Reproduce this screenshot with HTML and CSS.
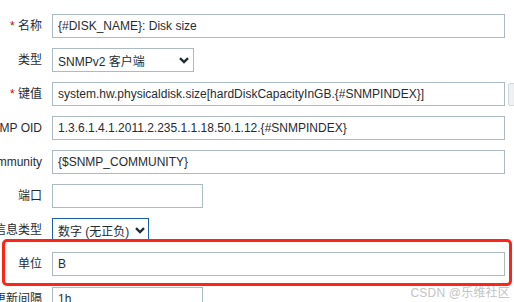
FILE: index.html
```html
<!DOCTYPE html>
<html lang="zh">
<head>
<meta charset="utf-8">
<link rel="stylesheet" href="styles.css">
</head>
<body>
<div class="form">
  <div class="row">
    <div class="label"><span><span class="req">*</span> 名称</span></div>
    <div class="input wide">{#DISK_NAME}: Disk size</div>
  </div>
  <div class="row">
    <div class="label"><span>类型</span></div>
    <div class="select type-select"><span>SNMPv2 客户端</span>
      <svg class="chev" width="10" height="7" viewBox="0 0 10 7"><path d="M1 1.2 L5 5 L9 1.2" fill="none" stroke="#1f2c33" stroke-width="2.4"/></svg>
    </div>
  </div>
  <div class="row">
    <div class="label"><span><span class="req">*</span> 键值</span></div>
    <div class="input wide">system.hw.physicaldisk.size[hardDiskCapacityInGB.{#SNMPINDEX}]</div>
    <div class="btn"></div>
  </div>
  <div class="row">
    <div class="label"><span>SNMP OID</span></div>
    <div class="input wide">1.3.6.1.4.1.2011.2.235.1.1.18.50.1.12.{#SNMPINDEX}</div>
  </div>
  <div class="row">
    <div class="label"><span>SNMP community</span></div>
    <div class="input wide">{$SNMP_COMMUNITY}</div>
  </div>
  <div class="row">
    <div class="label"><span>端口</span></div>
    <div class="input short"></div>
  </div>
  <div class="row">
    <div class="label"><span>信息类型</span></div>
    <div class="select info-select"><span>数字 (无正负)</span>
      <svg class="chev" width="10" height="7" viewBox="0 0 10 7"><path d="M1 1.2 L5 5 L9 1.2" fill="none" stroke="#1f2c33" stroke-width="2.4"/></svg>
    </div>
  </div>
  <div class="row">
    <div class="label"><span>单位</span></div>
    <div class="input wide">B</div>
  </div>
  <div class="row last">
    <div class="label"><span>更新间隔</span></div>
    <div class="input short">1h</div>
  </div>
</div>
<div class="highlight"></div>
<div class="watermark">CSDN @乐维社区</div>
</body>
</html>
```
FILE: styles.css
```css
html, body {
  margin: 0;
  padding: 0;
  background: #ffffff;
  overflow: hidden;
}
body {
  width: 514px;
  height: 302px;
  position: relative;
  font-family: "Liberation Sans", Arial, "Noto Sans CJK SC", sans-serif;
  font-size: 12px;
  color: #1f2c33;
}
.form {
  display: flex;
  flex-direction: column;
  gap: 10px;
  padding-top: 14px;
}
.row {
  display: flex;
  align-items: center;
  column-gap: 10px;
  height: 24px;
}
.row.last {
  margin-top: 1px;
}
.label {
  width: 42px;
  flex: none;
  display: flex;
  justify-content: flex-end;
  white-space: nowrap;
  line-height: 16px;
}
.req {
  color: #d40000;
}
.input, .select {
  box-sizing: border-box;
  height: 24px;
  border: 1px solid #acbbc2;
  background: #fff;
  padding: 0 5px;
  display: flex;
  align-items: center;
  white-space: nowrap;
  overflow: hidden;
  flex: none;
}
.wide { width: 453px; }
.short { width: 151px; }
.type-select { width: 142px; justify-content: space-between; padding-right: 4px; }
.info-select {
  width: 97px;
  justify-content: space-between;
  padding-right: 3px;
  border-color: #1b62a0;
}
.chev { flex: none; }
.btn {
  box-sizing: border-box;
  flex: none;
  margin-left: -7px;
  height: 23px;
  width: 60px;
  border: 1px solid #d3d8db;
  border-radius: 2px;
  background: #eef0f1;
}
.highlight {
  position: absolute;
  left: 2px;
  top: 239px;
  width: 510px;
  height: 47px;
  box-sizing: border-box;
  border: 3px solid #ff2418;
  border-radius: 5px;
}
.watermark {
  position: absolute;
  right: 4px;
  top: 283px;
  font-size: 12px;
  color: #c4c4c4;
  white-space: nowrap;
  letter-spacing: 0.2px;
}
```
